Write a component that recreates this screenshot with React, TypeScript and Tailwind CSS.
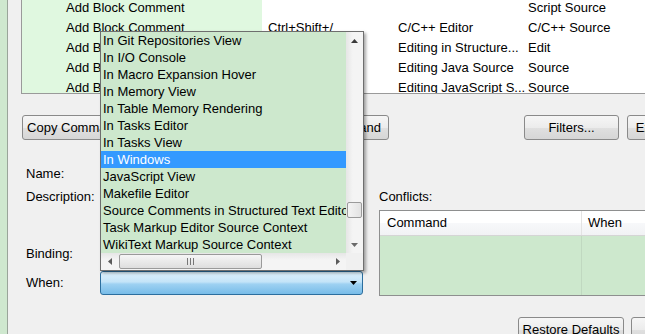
import React from "react";

const rows: string[][] = [
  ["Add Block Comment", "", "", "Script Source"],
  ["Add Block Comment", "Ctrl+Shift+/", "C/C++ Editor", "C/C++ Source"],
  ["Add Block Comment", "", "Editing in Structure...", "Edit"],
  ["Add Block Comment", "", "Editing Java Source", "Source"],
  ["Add Block Comment", "", "Editing JavaScript S...", "Source"],
];

const items = [
  "In Git Repositories View",
  "In I/O Console",
  "In Macro Expansion Hover",
  "In Memory View",
  "In Table Memory Rendering",
  "In Tasks Editor",
  "In Tasks View",
  "In Windows",
  "JavaScript View",
  "Makefile Editor",
  "Source Comments in Structured Text Editor",
  "Task Markup Editor Source Context",
  "WikiText Markup Source Context",
];

const btn =
  "h-[25px] shrink-0 rounded-[3px] border border-[#8a8a8a] bg-[linear-gradient(to_bottom,#f6f6f6_0%,#ececec_50%,#e0e0e0_51%,#d6d6d6_100%)] flex items-center justify-center whitespace-nowrap overflow-hidden text-[13px] text-black";

function Tri({ dir, color = "#404040" }: { dir: "up" | "down" | "left" | "right"; color?: string }) {
  const pts =
    dir === "up"
      ? "0,4 3.5,0 7,4"
      : dir === "down"
      ? "0,0 7,0 3.5,4"
      : dir === "left"
      ? "4,0 4,7 0,3.5"
      : "0,0 4,3.5 0,7";
  const w = dir === "up" || dir === "down" ? 7 : 4;
  const h = dir === "up" || dir === "down" ? 4 : 7;
  return (
    <svg width={w} height={h} viewBox={`0 0 ${w} ${h}`}>
      <polygon points={pts} fill={color} />
    </svg>
  );
}

export default function App() {
  return (
    <div className="relative w-[645px] h-[334px] overflow-hidden bg-[#f0f0f0] flex font-['Liberation_Sans',Arial,sans-serif] text-[13px] text-black">
      {/* left strip */}
      <div className="w-[8px] shrink-0 bg-[#cfe8cf] border-r border-[#9aa59a]" />

      <div className="flex-1 min-w-0 flex flex-col">
        {/* keys table */}
        <div className="ml-[13px] h-[94px] shrink-0 border-l border-b border-[#9a9a9a] overflow-hidden bg-white">
          <div className="-mt-[2px] flex flex-col">
            {rows.map((r, i) => (
              <div key={i} className="flex h-[20px] items-center whitespace-nowrap">
                <div className="w-[240px] h-full shrink-0 bg-[#e0f8e0] pl-[44px] flex items-center">{r[0]}</div>
                <div className="w-[130px] h-full shrink-0 pl-[6px] flex items-center">{r[1]}</div>
                <div className="w-[130px] h-full shrink-0 pl-[6px] flex items-center">{r[2]}</div>
                <div className="w-[130px] h-full shrink-0 pl-[6px] flex items-center">{r[3]}</div>
              </div>
            ))}
          </div>
        </div>

        {/* buttons row */}
        <div className="mt-[21px] flex shrink-0">
          <div className={`${btn} ml-[14px] w-[104px]`}>Copy Command</div>
          <div className={`${btn} ml-[142px] w-[121px]`}>Unbind Command</div>
          <div className={`${btn} ml-[135px] w-[95px]`}>Filters...</div>
          <div className={`${btn} ml-[8px] w-[95px]`}>Export CSV...</div>
        </div>

        {/* form area */}
        <div className="h-[156px] flex shrink-0">
          <div className="w-[355px] shrink-0 pl-[18px] flex flex-col">
            <div className="mt-[24px] h-[20px] flex items-center">Name:</div>
            <div className="mt-[3px] h-[20px] flex items-center">Description:</div>
            <div className="mt-[37px] h-[20px] flex items-center">Binding:</div>
            <div className="mt-[7px] h-[24px] flex items-center">
              <div className="w-[74px]">When:</div>
              <div className="w-[263px] h-[24px] rounded-[3px] border border-[#2c6e9e] bg-[linear-gradient(to_bottom,#dff1fc_0%,#c4e4f8_45%,#9ed1f2_55%,#78bce8_100%)] flex items-center justify-end pr-[5px]">
                <Tri dir="down" color="#000" />
              </div>
            </div>
          </div>

          <div className="ml-[16px] w-[300px] shrink-0 flex flex-col">
            <div className="mt-[47px] h-[20px] flex items-center">Conflicts:</div>
            <div className="mt-[3px] h-[86px] border border-[#8e8f8f] flex flex-col bg-[#cde8cd]">
              <div className="h-[25px] shrink-0 flex bg-[linear-gradient(to_bottom,#ffffff_0%,#ffffff_50%,#f7f8fa_51%,#f1f2f4_100%)] border-b border-[#d5d5d5]">
                <div className="w-[202px] pl-[7px] flex items-center border-r border-[#e3e3e3]">Command</div>
                <div className="flex-1 pl-[6px] flex items-center">When</div>
              </div>
              <div className="flex-1 flex">
                <div className="w-[202px] border-r border-[#c0d8c0]" />
                <div className="flex-1" />
              </div>
            </div>
          </div>
        </div>

        {/* bottom buttons */}
        <div className="mt-[21px] flex shrink-0">
          <div className={`${btn} ml-[510px] w-[106px] text-[12.6px]`}>Restore Defaults</div>
          <div className={`${btn} ml-[7px] w-[90px]`}>Apply</div>
        </div>
      </div>

      {/* dropdown popup */}
      <div className="absolute left-[100px] top-[31px] w-[264px] h-[240px] border border-[#6e6e6e] bg-[#cde8cd] shadow-[2px_2px_3px_rgba(0,0,0,0.35)] flex flex-col">
        <div className="flex h-[221px]">
          <div className="w-[245px] overflow-hidden flex flex-col">
            {items.map((it) => (
              <div
                key={it}
                className={`h-[17px] shrink-0 pl-[2px] flex items-center whitespace-nowrap ${
                  it === "In Windows" ? "bg-[#3399ff] text-white" : ""
                }`}
              >
                {it}
              </div>
            ))}
          </div>
          <div className="w-[17px] flex flex-col bg-[linear-gradient(to_right,#e6e6e6,#f4f4f4_40%,#f4f4f4)]">
            <div className="h-[17px] flex items-center justify-center">
              <Tri dir="up" color="#3a3a3a" />
            </div>
            <div className="flex-1 flex flex-col">
              <div className="mt-[153px] h-[16px] mx-[1px] rounded-[2px] border border-[#9a9a9a] bg-[linear-gradient(to_right,#f4f4f4,#e2e2e2)]" />
            </div>
            <div className="h-[17px] flex items-center justify-center">
              <Tri dir="down" color="#6a6a6a" />
            </div>
          </div>
        </div>
        <div className="flex h-[17px]">
          <div className="w-[245px] flex items-center bg-[linear-gradient(to_bottom,#e6e6e6,#f4f4f4_40%,#f4f4f4)]">
            <div className="w-[17px] h-full flex items-center justify-center">
              <Tri dir="left" color="#5a5a5a" />
            </div>
            <div className="ml-[1px] w-[143px] h-[15px] rounded-[2px] border border-[#9a9a9a] bg-[linear-gradient(to_bottom,#f6f6f6,#dedede)] flex items-center justify-center">
              <svg width="7" height="7" viewBox="0 0 7 7">
                <rect x="0" y="0" width="1" height="7" fill="#777" />
                <rect x="3" y="0" width="1" height="7" fill="#777" />
                <rect x="6" y="0" width="1" height="7" fill="#777" />
              </svg>
            </div>
            <div className="flex-1" />
            <div className="w-[17px] h-full flex items-center justify-center">
              <Tri dir="right" color="#5a5a5a" />
            </div>
          </div>
          <div className="w-[17px] bg-[#f0f0f0]" />
        </div>
      </div>
    </div>
  );
}
